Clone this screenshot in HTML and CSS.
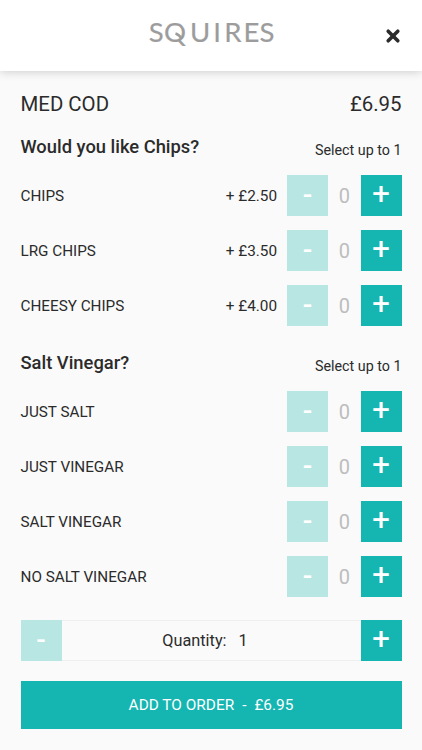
FILE: index.html
```
<!DOCTYPE html>
<html lang="en">
<head>
<meta charset="utf-8">
<title>Squires</title>
<link rel="stylesheet" href="styles.css">
</head>
<body>
<header class="header">
  <svg class="logo" width="130" height="30" viewBox="0 0 130 30" role="img" aria-label="Squires">
    <text class="logo-text" y="24" x="1.7 17 43 66.2 77.2 96.6 112.6">SQUIRES</text>
    <path class="logo-tail" d="M28.5 15.5 Q32 16.5 35 21"/>
  </svg>
  <button class="close" aria-label="Close"><svg width="16" height="16" viewBox="0 0 16 16"><path d="M3.2 3.2 12.8 12.8M12.8 3.2 3.2 12.8"/></svg></button>
</header>
<main class="content">
  <div class="title"><span>MED COD</span><span>£6.95</span></div>
  <section class="group">
    <div class="group-head"><h2>Would you like Chips?</h2><span class="limit">Select up to 1</span></div>
    <div class="row"><span class="name">CHIPS</span><span class="price">+ £2.50</span><button class="step off">-</button><span class="count">0</span><button class="step plus">+</button></div>
    <div class="row"><span class="name">LRG CHIPS</span><span class="price">+ £3.50</span><button class="step off">-</button><span class="count">0</span><button class="step plus">+</button></div>
    <div class="row"><span class="name">CHEESY CHIPS</span><span class="price">+ £4.00</span><button class="step off">-</button><span class="count">0</span><button class="step plus">+</button></div>
  </section>
  <section class="group">
    <div class="group-head"><h2>Salt Vinegar?</h2><span class="limit">Select up to 1</span></div>
    <div class="row"><span class="name">JUST SALT</span><button class="step off">-</button><span class="count">0</span><button class="step plus">+</button></div>
    <div class="row"><span class="name">JUST VINEGAR</span><button class="step off">-</button><span class="count">0</span><button class="step plus">+</button></div>
    <div class="row"><span class="name">SALT VINEGAR</span><button class="step off">-</button><span class="count">0</span><button class="step plus">+</button></div>
    <div class="row"><span class="name">NO SALT VINEGAR</span><button class="step off">-</button><span class="count">0</span><button class="step plus">+</button></div>
  </section>
  <div class="quantity"><button class="step off">-</button><span class="quantity-label"><span>Quantity:</span><span>1</span></span><button class="step plus">+</button></div>
  <button class="add"><span>ADD TO ORDER</span><span>-</span><span>£6.95</span></button>
</main>
</body>
</html>
```
FILE: styles.css
```
* { box-sizing: border-box; }
body {
  margin: 0;
  height: 750px;
  overflow: hidden;
  background: #fafafa;
  color: #2b2b2b;
  font: 15.25px/20px Roboto, sans-serif;
}
button {
  margin: 0;
  padding: 0;
  border: 0;
  color: inherit;
  font: inherit;
}
.header {
  display: flex;
  position: relative;
  align-items: flex-start;
  justify-content: space-between;
  height: 71px;
  padding: 18px 21px 0 147px;
  background: #fff;
  box-shadow: 0 1px 9px rgba(0, 0, 0, .18);
}
.logo { overflow: visible; }
.logo-text {
  fill: #9c9c9c;
  stroke: #9c9c9c;
  stroke-width: .2;
  font: 27.5px Lato, sans-serif;
}
.logo-tail {
  fill: none;
  stroke: #9c9c9c;
  stroke-width: 2.4;
}
.close {
  display: flex;
  margin-top: 10px;
  background: none;
}
.close path {
  stroke: #2b2b2b;
  stroke-width: 3.6;
  stroke-linecap: round;
}
.content { padding: 21px 20.5px 0; }
.title {
  display: flex;
  justify-content: space-between;
  height: 41px;
  font-size: 20.4px;
  line-height: 24px;
}
.group { margin-bottom: 23px; }
.group-head {
  display: flex;
  justify-content: space-between;
  height: 42px;
}
h2 {
  margin: 2px 0 0;
  font-size: 18.35px;
  font-weight: 500;
  line-height: 24px;
}
.limit {
  padding-top: 7px;
  font-size: 14.3px;
}
.row {
  display: flex;
  align-items: center;
  height: 41px;
  margin-bottom: 14px;
}
.group .row:last-child { margin-bottom: 0; }
.name { flex: 1; }
.price {
  margin-right: 10px;
  font-size: 15.3px;
}
.step {
  width: 41px;
  height: 41px;
  padding-bottom: 4px;
  background: #15b5b1;
  color: #fff;
  font-size: 31px;
  line-height: 35px;
}
.plus { -webkit-text-stroke: .2px #fff; }
.off {
  padding-bottom: 2px;
  background: #b8e6e3;
  font-size: 28px;
  font-weight: 500;
  line-height: 33px;
}
.count {
  width: 32.5px;
  padding-top: 1px;
  color: #bdbdbd;
  font-size: 20px;
  line-height: 22px;
  text-align: center;
}
.quantity {
  display: flex;
  height: 41px;
  margin-bottom: 20px;
}
.quantity-label {
  display: flex;
  flex: 1;
  align-items: center;
  justify-content: center;
  gap: 12px;
  padding-right: 12px;
  border-top: 1px solid #efefef;
  border-bottom: 1px solid #efefef;
  font-size: 16.3px;
}
.add {
  display: flex;
  align-items: center;
  justify-content: center;
  gap: 8px;
  width: 100%;
  height: 48px;
  background: #15b5b1;
  color: #fff;
  font-size: 15.4px;
}
```
